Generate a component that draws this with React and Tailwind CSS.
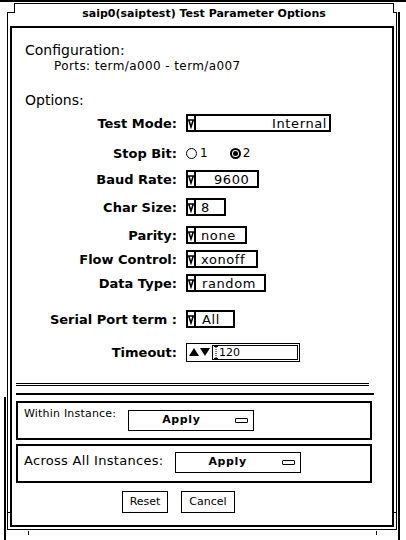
import React from "react";

// OpenWindows-style "Test Parameter Options" dialog for the saip0 serial port test.

function Tri() {
  return (
    <svg width="7" height="11" viewBox="0 0 7 11">
      <polygon points="0.9,1.5 6.1,1.5 3.5,9.6" fill="none" stroke="black" strokeWidth="1.8" />
    </svg>
  );
}

function Pick({ width, value, pad }) {
  return (
    <div className={`flex h-[18px] border-2 border-black ${width}`}>
      <div className="flex w-[8px] items-center justify-center border-r-2 border-black">
        <Tri />
      </div>
      <div className={`flex flex-1 items-center whitespace-nowrap text-[13px] leading-none tracking-[0.6px] ${pad}`}>
        {value}
      </div>
    </div>
  );
}

function Row({ label, top, children }) {
  return (
    <div className={`flex h-[18px] items-center gap-[9px] ${top}`}>
      <div className="w-[165px] text-right text-[13px] font-bold leading-none whitespace-nowrap">{label}</div>
      {children}
    </div>
  );
}

function Radio({ on }) {
  return (
    <span
      className={`flex h-[11px] w-[11px] items-center justify-center rounded-full border-black ${
        on ? "border-2" : "border"
      }`}
    >
      {on && <span className="h-[5px] w-[5px] rounded-full bg-black" />}
    </span>
  );
}

function MenuButton({ left }) {
  return (
    <div className={`flex h-[21px] w-[126px] items-center border border-black ${left}`}>
      <span className="pl-[33px] text-[11px] font-bold tracking-[0.6px]">Apply</span>
      <span className="ml-auto mr-[5px] h-[5px] w-[13px] rounded-[1px] border border-black" />
    </div>
  );
}

export default function App() {
  return (
    <div className="relative h-[540px] w-[406px] overflow-hidden border-t-2 border-black bg-white font-['DejaVu_Sans',sans-serif] text-black">
      {/* heavy outer frame */}
      <div className="relative ml-[4px] mt-[2px] h-[531px] w-[396px] border-r-2 border-b-2 border-black">
        <div className="absolute bottom-0 left-0 top-[385px] w-[2px] bg-black" />

        {/* thin window frame */}
        <div className="ml-[3px] mt-[10px] h-[518px] w-[390px] border border-black">
          {/* title notch */}
          <div className="relative -mt-[10px] ml-[6px] mr-[2px] h-[10px] border-x border-t border-black bg-white pt-[3px]">
            <div className="whitespace-nowrap text-center text-[11px] font-bold leading-[14px]">
              saip0(saiptest) Test Parameter Options
            </div>
          </div>

          {/* main panel */}
          <div className="ml-[2px] mt-[13px] h-[501px] w-[384px] border-2 border-black">
            <div className="ml-[13px] mt-[14px] text-[14px] leading-[17px]">Configuration:</div>
            <div className="ml-[42px] text-[12px] leading-[15px] tracking-[0.4px]">Ports: term/a000 - term/a007</div>
            <div className="ml-[13px] mt-[18px] text-[14px] leading-[17px]">Options:</div>

            <Row label="Test Mode:" top="mt-[5px]">
              <Pick width="w-[145px]" value="Internal" pad="justify-end pr-[2px]" />
            </Row>
            <Row label="Stop Bit:" top="mt-[12px]">
              <div className="flex items-center text-[12px] leading-none">
                <Radio />
                <span className="ml-[3px]">1</span>
                <span className="ml-[22px]">
                  <Radio on />
                </span>
                <span className="ml-[2px]">2</span>
              </div>
            </Row>
            <Row label="Baud Rate:" top="mt-[8px]">
              <Pick width="w-[73px]" value="9600" pad="pl-[18px]" />
            </Row>
            <Row label="Char Size:" top="mt-[10px]">
              <Pick width="w-[40px]" value="8" pad="pl-[5px]" />
            </Row>
            <Row label="Parity:" top="mt-[10px]">
              <Pick width="w-[61px]" value="none" pad="pl-[5px]" />
            </Row>
            <Row label="Flow Control:" top="mt-[6px]">
              <Pick width="w-[72px]" value="xonoff" pad="pl-[5px]" />
            </Row>
            <Row label="Data Type:" top="mt-[6px]">
              <Pick width="w-[80px]" value="random" pad="pl-[6px]" />
            </Row>
            <Row label="Serial Port term :" top="mt-[18px]">
              <Pick width="w-[49px]" value="All" pad="pl-[6px]" />
            </Row>
            <Row label="Timeout:" top="mt-[15px]">
              <div className="flex h-[19px] w-[114px] items-stretch border border-black p-[1px]">
                <div className="flex items-center gap-[1px] pl-[1px]">
                  <svg width="10" height="10" viewBox="0 0 10 10">
                    <polygon points="0,9 10,9 5,1" fill="black" />
                  </svg>
                  <svg width="10" height="10" viewBox="0 0 10 10">
                    <polygon points="0,1 10,1 5,9" fill="black" />
                  </svg>
                </div>
                <div className="ml-[2px] flex flex-1 items-center border border-black pl-[1px] text-[11px] leading-none">
                  <svg width="4" height="13" viewBox="0 0 4 13" className="mr-[1px]">
                    <path d="M0 0.5H4M0 12.5H4" stroke="black" strokeWidth="1" />
                    <path d="M2 1V12" stroke="black" strokeWidth="1" strokeDasharray="1 1" />
                  </svg>
                  120
                </div>
              </div>
            </Row>

            {/* lower section */}
            <div className="ml-[4px]">
              <div className="mt-[22px] h-[3px] w-[353px] border-y border-black" />
              <div className="mt-[7px] h-[2px] w-[358px] bg-black" />

              <div className="mt-[6px] flex h-[39px] w-[356px] items-start border-2 border-black">
                <span className="ml-[6px] mt-[4px] text-[11px] leading-[14px] tracking-[0.2px]">Within Instance:</span>
                <div className="mt-[7px]">
                  <MenuButton left="ml-[12px]" />
                </div>
              </div>

              <div className="mt-[4px] flex h-[39px] w-[356px] items-start border-2 border-black">
                <span className="ml-[6px] mt-[7px] text-[13px] leading-[16px] tracking-[0.3px]">Across All Instances:</span>
                <div className="mt-[6px]">
                  <MenuButton left="ml-[11px]" />
                </div>
              </div>

              <div className="mt-[8px] flex gap-[13px] pl-[106px]">
                <div className="flex h-[22px] w-[46px] items-center justify-center border border-black text-[11px]">Reset</div>
                <div className="flex h-[22px] w-[54px] items-center justify-center border border-black text-[11px]">Cancel</div>
              </div>
            </div>
          </div>
        </div>
      </div>

      {/* resize corner ticks */}
      <div className="absolute left-[7px] top-[510px] h-[1px] w-[3px] bg-black" />
      <div className="absolute left-[394px] top-[510px] h-[1px] w-[3px] bg-black" />
      <div className="absolute left-[28px] top-[529px] h-[4px] w-[1px] bg-black" />
      <div className="absolute left-[376px] top-[529px] h-[4px] w-[1px] bg-black" />
    </div>
  );
}
